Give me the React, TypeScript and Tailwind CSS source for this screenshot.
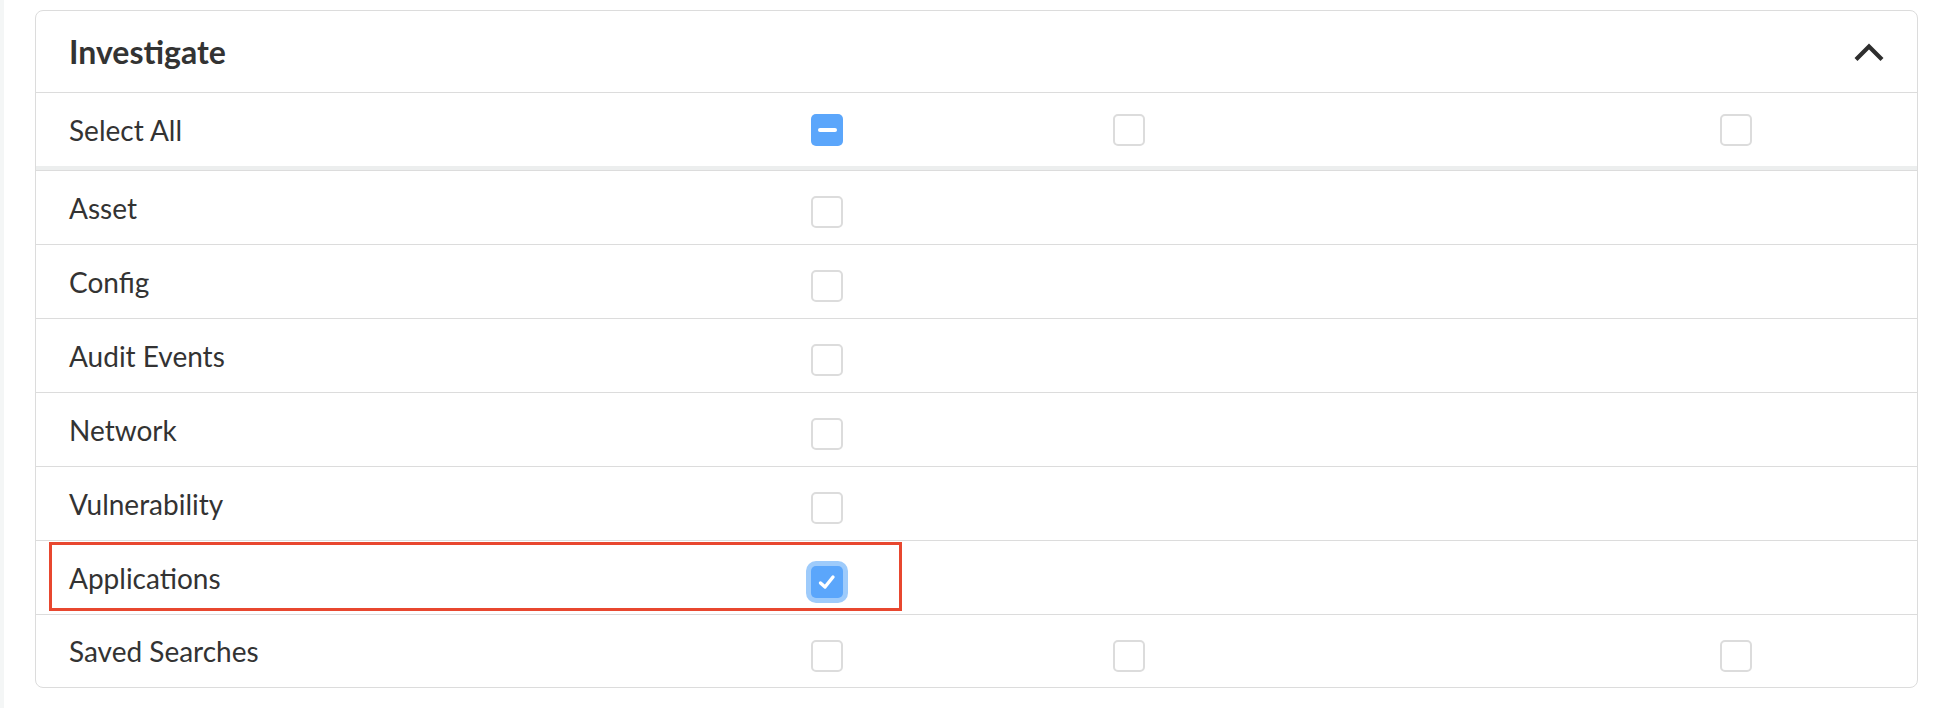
import React from 'react';

type Mark = 'none' | 'empty' | 'partial' | 'checked';

interface RowDef {
  label: string;
  cells: [Mark, Mark, Mark];
  highlight?: boolean;
}

const rows: RowDef[] = [
  { label: 'Asset', cells: ['empty', 'none', 'none'] },
  { label: 'Config', cells: ['empty', 'none', 'none'] },
  { label: 'Audit Events', cells: ['empty', 'none', 'none'] },
  { label: 'Network', cells: ['empty', 'none', 'none'] },
  { label: 'Vulnerability', cells: ['empty', 'none', 'none'] },
  { label: 'Applications', cells: ['checked', 'none', 'none'], highlight: true },
  { label: 'Saved Searches', cells: ['empty', 'empty', 'empty'] },
];

const Box: React.FC<{ mark: Mark }> = ({ mark }) => {
  if (mark === 'none') return null;
  if (mark === 'empty') {
    return <div className="w-[32px] h-[32px] rounded-[5px] border-2 border-[#dcdcdc] bg-white" />;
  }
  if (mark === 'partial') {
    return (
      <div className="w-[32px] h-[32px] rounded-[5px] bg-[#5ba6fb] flex items-center justify-center">
        <div className="w-[19px] h-[4px] rounded-full bg-white" />
      </div>
    );
  }
  return (
    <div className="w-[32px] h-[32px] rounded-[5px] bg-[#5ba6fb] flex items-center justify-center shadow-[0_0_0_5px_#9ecbfb]">
      <svg width="18" height="16" viewBox="0 0 18 16" fill="none">
        <path d="M2.5 9 L7 13 L15 3" stroke="white" strokeWidth="3.4" strokeLinecap="round" strokeLinejoin="round" />
      </svg>
    </div>
  );
};

const Cells: React.FC<{ cells: [Mark, Mark, Mark]; shift?: boolean }> = ({ cells, shift }) => {
  const cls = shift ? 'flex items-center pt-[9px]' : 'flex items-center';
  return (
    <>
      <div className={'w-[302px] ' + cls}>
        <Box mark={cells[0]} />
      </div>
      <div className={'w-[607px] ' + cls}>
        <Box mark={cells[1]} />
      </div>
      <div className={'flex-1 ' + cls}>
        <Box mark={cells[2]} />
      </div>
    </>
  );
};

export default function App() {
  return (
    <div className="flex w-full h-[708px] bg-white text-[#333333]" style={{ fontFamily: 'Lato, "Open Sans", sans-serif' }}>
      <div className="w-[4px] h-full bg-[#f4f6f6]" />
      <div className="flex-1 pl-[31px] pr-[24px] pt-[10px]">
        <div className="border border-[#dcdcdc] rounded-[8px] overflow-hidden">
          {/* header */}
          <div className="h-[82px] flex items-center justify-between pl-[33px] pr-[32px] border-b border-[#dcdcdc]">
            <span className="text-[32px] font-bold leading-none">Investigate</span>
            <svg width="32" height="20" viewBox="0 0 32 20" fill="none">
              <path d="M3 17.5 L16 4.5 L29 17.5" stroke="#2e2e2e" strokeWidth="4.2" />
            </svg>
          </div>

          {/* select all */}
          <div className="h-[73px] flex items-center">
            <div className="w-[775px] pl-[33px] text-[28px] leading-none">Select All</div>
            <Cells cells={['partial', 'empty', 'empty']} />
          </div>
          <div className="h-[5px] bg-[#eceeee] border-b border-[#dcdcdc]" />

          {rows.map((row, i) => (
            <div
              key={row.label}
              className={
                'relative flex items-center ' +
                (i === rows.length - 1 ? 'h-[72px]' : 'h-[74px] border-b border-[#dcdcdc]')
              }
            >
              <div className="w-[775px] pl-[33px] text-[28px] leading-none">{row.label}</div>
              <Cells cells={row.cells} shift />
              {row.highlight && (
                <div className="absolute left-[13px] top-[1px] w-[853px] h-[69px] border-[3px] border-[#e8472f] pointer-events-none" />
              )}
            </div>
          ))}
        </div>
      </div>
    </div>
  );
}
